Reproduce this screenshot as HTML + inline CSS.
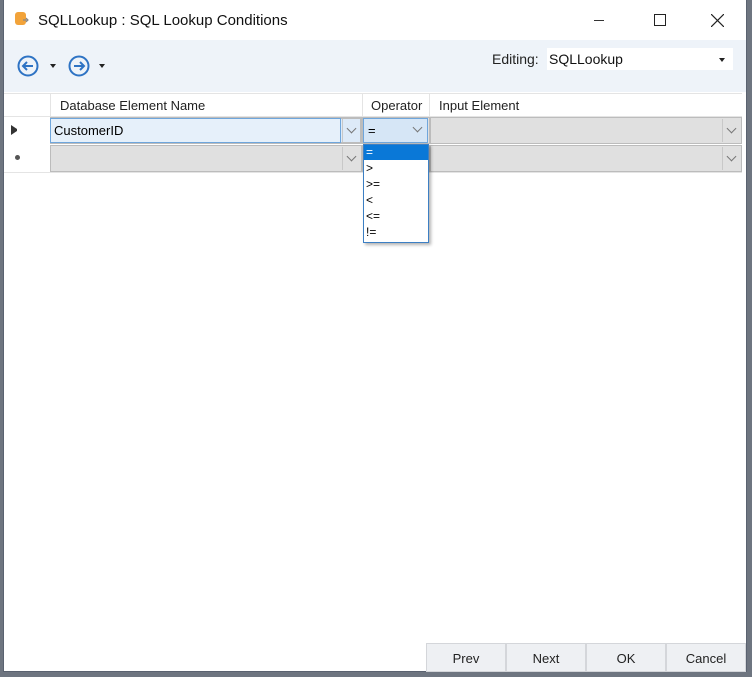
<!DOCTYPE html>
<html><head><style>
*{margin:0;padding:0;box-sizing:border-box}
body{width:752px;height:677px;background:#6e7580;position:relative;overflow:hidden;font-family:"Liberation Sans",sans-serif;font-size:12px;color:#000}
.win{position:absolute;left:3px;top:0;width:744px;height:672px;background:#fff;border:1px solid #5a6270;border-top:none}
.abs{position:absolute}
.tb{left:0;top:40px;width:742px;height:52px;background:#eef3f9}
.hdr{font-size:13px;color:#222}
.cell{position:absolute;background:#e0e0e0;border:1px solid #bcbcbc}
.dd{position:absolute;width:18px;border-left:1px solid #c8c8c8}
.chev{position:absolute;width:7px;height:7px;border-right:1.2px solid #777;border-bottom:1.2px solid #777;transform:rotate(45deg)}
.btn{position:absolute;top:643px;height:29px;width:80px;background:#eef0f3;border:1px solid #d4d6da;text-align:center;line-height:29px;font-size:13px;color:#222}
</style></head><body>
<div class="win">
  <svg class="abs" style="left:10px;top:11px" width="16" height="18"><rect x="1" y="1" width="11" height="13" rx="3" fill="#f2a33a"/><path d="M9 9h5M12 7l2 2-2 2" stroke="#888" stroke-width="1.2" fill="none"/></svg>
  <div class="abs" style="left:34px;top:12px;font-size:15px;color:#111">SQLLookup : SQL Lookup Conditions</div>
  <div class="abs" style="left:590px;top:20px;width:10px;height:1px;background:#333"></div>
  <div class="abs" style="left:650px;top:14px;width:12px;height:12px;border:1.2px solid #222"></div>
  <svg class="abs" style="left:707px;top:14px" width="13" height="13"><path d="M0 0L13 13M13 0L0 13" stroke="#222" stroke-width="1.2"/></svg>
  <div class="abs tb"></div>
  <svg class="abs" style="left:12px;top:54px" width="24" height="24"><circle cx="12" cy="12" r="9.5" fill="none" stroke="#2e73c4" stroke-width="2"/><path d="M17 12H7M11 8l-4 4 4 4" stroke="#2e73c4" stroke-width="2" fill="none"/></svg>
  <div class="abs" style="left:46px;top:64px;border:3px solid transparent;border-top:4px solid #222"></div>
  <svg class="abs" style="left:63px;top:54px" width="24" height="24"><circle cx="12" cy="12" r="9.5" fill="none" stroke="#2e73c4" stroke-width="2"/><path d="M7 12h10M13 8l4 4-4 4" stroke="#2e73c4" stroke-width="2" fill="none"/></svg>
  <div class="abs" style="left:95px;top:64px;border:3px solid transparent;border-top:4px solid #222"></div>
  <div class="abs" style="left:488px;top:51px;font-size:14px;color:#222">Editing:</div>
  <div class="abs" style="left:543px;top:48px;width:186px;height:22px;background:#fff"></div>
  <div class="abs" style="left:545px;top:51px;font-size:14px;color:#111">SQLLookup</div>
  <div class="abs" style="left:715px;top:58px;border:3px solid transparent;border-top:4px solid #222"></div>
  <!-- grid header -->
  <div class="abs" style="left:0;top:93px;width:738px;height:24px;border-top:1px solid #e4e4e4;border-bottom:1px solid #e4e4e4"></div>
  <div class="abs" style="left:46px;top:93px;width:1px;height:24px;background:#e4e4e4"></div>
  <div class="abs" style="left:358px;top:93px;width:1px;height:24px;background:#e4e4e4"></div>
  <div class="abs" style="left:425px;top:93px;width:1px;height:24px;background:#e4e4e4"></div>
  <div class="abs hdr" style="left:56px;top:98px">Database Element Name</div>
  <div class="abs hdr" style="left:367px;top:98px">Operator</div>
  <div class="abs hdr" style="left:435px;top:98px">Input Element</div>
  <!-- row1 -->
  <div class="abs" style="left:7px;top:125px;border:4px solid transparent;border-left:6px solid #333;border-right:none;height:10px;width:6px"></div>
  <div class="cell" style="left:46px;top:117px;width:312px;height:27px;background:#ddeaf8;border:2px solid #bcbcbc"></div>
  <div class="abs" style="left:46px;top:118px;width:291px;height:25px;border:1px solid #6fa6dc;background:#e6f0fa"></div>
  <div class="abs" style="left:50px;top:123px;font-size:13px">CustomerID</div>
  <div class="dd" style="left:338px;top:119px;height:23px"><div class="chev" style="left:5px;top:6px"></div></div>
  <div class="cell" style="left:358px;top:117px;width:68px;height:27px;background:#e0e0e0"></div>
  <div class="abs" style="left:359px;top:118px;width:65px;height:25px;border:1px solid #6fa6dc;background:#d6e6f6"></div>
  <div class="abs" style="left:364px;top:123px;font-size:13px">=</div>
  <div class="chev" style="left:410px;top:124px"></div>
  <div class="cell" style="left:426px;top:117px;width:312px;height:27px"></div>
  <div class="dd" style="left:718px;top:119px;height:23px"><div class="chev" style="left:5px;top:6px"></div></div>
  <!-- row2 -->
  <div class="abs" style="left:11px;top:155px;width:5px;height:5px;border-radius:50%;background:#555"></div>
  <div class="cell" style="left:46px;top:145px;width:312px;height:27px"></div>
  <div class="dd" style="left:338px;top:147px;height:23px"><div class="chev" style="left:5px;top:6px"></div></div>
  <div class="cell" style="left:358px;top:145px;width:68px;height:27px"></div>
  <div class="cell" style="left:426px;top:145px;width:312px;height:27px"></div>
  <div class="dd" style="left:718px;top:147px;height:23px"><div class="chev" style="left:5px;top:6px"></div></div>
  <div class="abs" style="left:0;top:172px;width:738px;height:1px;background:#e4e4e4"></div>
  <!-- dropdown list -->
  <div class="abs" style="left:359px;top:144px;width:66px;height:99px;background:#fff;border:1px solid #3c7fc4;box-shadow:2px 2px 3px rgba(0,0,0,.3);font-size:12px;line-height:16px">
    <div style="background:#0a78d7;color:#fff;padding-left:2px;height:15px;line-height:14px">=</div>
    <div style="padding-left:2px">&gt;</div>
    <div style="padding-left:2px">&gt;=</div>
    <div style="padding-left:2px">&lt;</div>
    <div style="padding-left:2px">&lt;=</div>
    <div style="padding-left:2px">!=</div>
  </div>
  <div class="btn" style="left:422px">Prev</div>
  <div class="btn" style="left:502px">Next</div>
  <div class="btn" style="left:582px">OK</div>
  <div class="btn" style="left:662px;width:80px">Cancel</div>
</div>
</body></html>
